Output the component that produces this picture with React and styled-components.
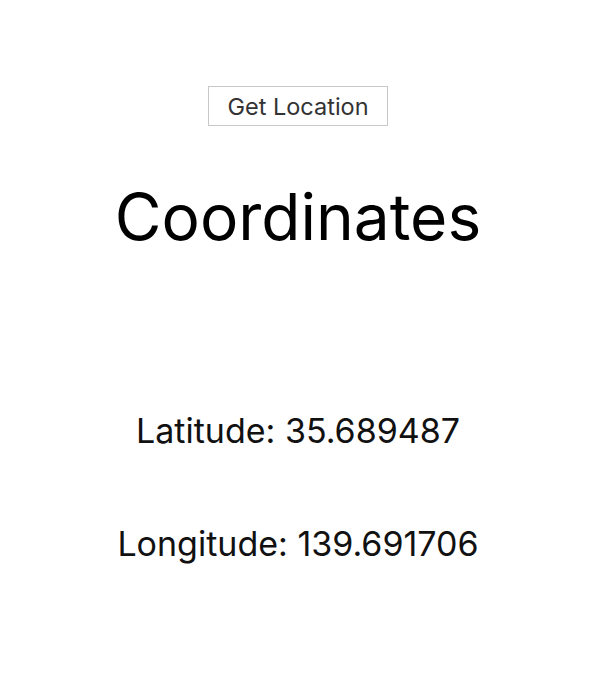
import React from "react";
import styled, { createGlobalStyle } from "styled-components";

const Global = createGlobalStyle`
  html, body { margin: 0; padding: 0; background: #fff; }
  body { font-family: Inter, "Liberation Sans", sans-serif; }
`;

const Page = styled.div`
  display: flex;
  flex-direction: column;
  align-items: center;
  padding: 86px 4px 0 0;
`;

const Button = styled.button`
  font-family: Inter, "Liberation Sans", sans-serif;
  font-size: 23.5px;
  color: #333;
  background: #fff;
  border: 1px solid #c8c8c8;
  height: 40px;
  width: 180px;
  padding: 0;
  cursor: pointer;
`;

const Title = styled.h1`
  margin: 51px 0 0;
  font-size: 64px;
  font-weight: 400;
  color: #000;
  line-height: 80px;
`;

const Line = styled.p`
  margin: ${(p) => p.$top}px 0 0;
  font-size: 34px;
  color: #111;
  line-height: 40px;
`;

export default function App() {
  return (
    <>
      <Global />
      <Page>
        <Button>Get Location</Button>
        <Title>Coordinates</Title>
        <Line $top={154}>Latitude: 35.689487</Line>
        <Line $top={73}>Longitude: 139.691706</Line>
      </Page>
    </>
  );
}
